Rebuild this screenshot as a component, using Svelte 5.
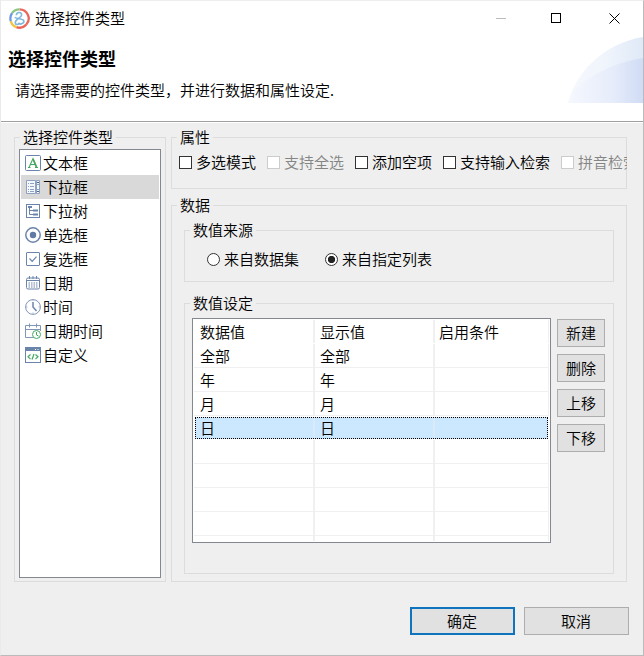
<script>

let types = [
    { id: "text", name: "文本框" },
    { id: "select", name: "下拉框" },
    { id: "tree", name: "下拉树" },
    { id: "radio", name: "单选框" },
    { id: "check", name: "复选框" },
    { id: "date", name: "日期" },
    { id: "time", name: "时间" },
    { id: "datetime", name: "日期时间" },
    { id: "custom", name: "自定义" }
]

let options = [
    { name: "多选模式" },
    { name: "支持全选", disabled: true },
    { name: "添加空项" },
    { name: "支持输入检索" },
    { name: "拼音检索", disabled: true }
]

let sources = ["来自数据集", "来自指定列表"]
let columns = ["数据值", "显示值", "启用条件"]
let actions = ["新建", "删除", "上移", "下移"]

let rows = [
    ["全部", "全部", ""],
    ["年", "年", ""],
    ["月", "月", ""],
    ["日", "日", ""],
    ["", "", ""],
    ["", "", ""],
    ["", "", ""],
    ["", "", ""]
]

let type = $state("select")
let source = $state(1)
let row = $state(3)
let checked = $state([false, false, false, false, false])

function toggle(i) {
    if (options[i].disabled) return
    checked[i] = !checked[i]
}

function selectRow(i) {
    if (rows[i][0] == "") return
    row = i
}

</script>

{#snippet icon(id)}
<svg class="icon" width="16" height="16" viewBox="0 0 16 16" fill="none" stroke="#6b84ab">
    {#if id == "text"}
    <rect x=".5" y=".5" width="15" height="15" rx="1" fill="#fff" />
    <path d="M4 12.5 8 3.5l4 9M5.500 9.500h5M3 12.500h2.500M10 12.500h3" stroke="#45a862" stroke-width="1.1" />
    <path d="M8 4l3.300 8" stroke="#45a862" stroke-width="1.6" />
    {:else if id == "select"}
    <path d="M1.500 1.500h9v13h-9z" fill="#f4f7fb" stroke="#8da2c2" />
    <path d="M3 4.500h1M5 4.500h4M3 7.500h1M5 7.500h4M3 10.500h1M5 10.500h4M3 12.500h1M5 12.500h4" stroke="#8da2c2" />
    <path d="M11.500 1.500h3v13h-3zM11.500 5.500h3M11.500 10.500h3" fill="#f4f7fb" stroke="#8da2c2" />
    <path d="M12 4l1-1 1 1M12 12l1 1 1-1" stroke="#49658f" />
    {:else if id == "tree"}
    <rect x="1.500" y="1.500" width="13" height="13" />
    <path d="M4.500 4v7.500h4M4.500 7.500h4" />
    <path d="M3 4h4M8 7.500h5M8 11.500h5" stroke-width="2" />
    {:else if id == "radio"}
    <circle cx="8" cy="8" r="7.200" stroke-width="1.500" />
    <circle cx="8" cy="8" r="3.200" fill="#607ba4" stroke="none" />
    {:else if id == "check"}
    <rect x="1.500" y="1.500" width="13" height="13" rx=".5" />
    <path d="M4.500 7.500l2.700 2.800 4.300-4.600" stroke-width="1.200" />
    {:else if id == "date"}
    <rect x="1.500" y="3" width="13" height="11" rx="1.500" />
    <path d="M4.500 1v3M8 1v3M11.500 1v3M2 5.500h12" />
    <path d="M3.500 8h9M3.500 10h9M3.500 12h9" stroke-width="1.200" stroke-dasharray="1.500 1" />
    {:else if id == "time"}
    <circle cx="8" cy="8" r="7.400" stroke="#7f96b8" />
    <path d="M8 3v5l3.500 4" stroke-width="1.500" />
    <path d="M8 1v1M1 8h1.500M13.500 8H15M8 13.500V15" stroke="#a5b5cd" />
    {:else if id == "datetime"}
    <path d="M8 14.500H.5v-12h15V8M.5 6.500h15M4.500.5v4M11.500.5v4" stroke="#7f96b8" />
    <circle cx="11.500" cy="11.500" r="4" fill="#fff" stroke="#45a862" />
    <path d="M11.500 9v3l2 1" stroke="#45a862" />
    {:else}
    <rect x=".5" y=".5" width="15" height="15" />
    <path d="M1 2.500h14" stroke-width="3" />
    <path d="M10 2.500h1M12.500 2.500h1" stroke="#fff" />
    <path d="M5.500 7.500 3 9.800l2.500 2.300M10.500 7.500 13 9.800l-2.500 2.300M9 7l-2 5.500" stroke="#45a862" stroke-width="1.200" />
    {/if}
</svg>
{/snippet}

<div class="window">

    <div class="titlebar">
        <svg class="logo" width="21" height="21" viewBox="0 0 20 20" fill="none" stroke-width="2.200">
            <path d="M10 1.300A8.700 8.700 0 0 1 16.500 15.800" stroke="#e8695c" />
            <path d="M16.500 15.800A8.700 8.700 0 0 1 7 18.200" stroke="#ea6557" />
            <path d="M7 18.200A8.700 8.700 0 0 1 1.700 12.500" stroke="#f3c545" />
            <path d="M1.700 12.500A8.700 8.700 0 0 1 3 4.800" stroke="#6e9be0" />
            <path d="M3 4.800A8.700 8.700 0 0 1 10 1.300" stroke="#8cc684" />
            <path d="M7 7c0-3.500 5.500-3.500 5-.3-.4 2.600-6 4.200-6 7 0 2.800 3.500 2.300 4.500.5M5.500 8.800c2 2 7.500 1 8.500 3.200s-3 4.500-5.500 2.500" stroke="#7fb8dd" stroke-width="1.500" />
        </svg>
        <span class="caption">选择控件类型</span>
        <svg width="130" height="12" viewBox="0 0 130 12" fill="none" stroke="#000">
            <path d="M2 6.500h10" stroke="#bbb" />
            <rect x="57.500" y="1.500" width="9" height="9" />
            <path d="M115.500 1.500l10 10M125.500 1.500l-10 10" />
        </svg>
    </div>

    <div class="header">
        <div class="intro">
            <h2>选择控件类型</h2>
            <p>请选择需要的控件类型，并进行数据和属性设定.</p>
        </div>
        <svg class="banner" width="75" height="66" viewBox="0 0 75 66">
            <defs>
                <linearGradient id="outer">
                    <stop offset="0" stop-color="#f6f8fd" />
                    <stop offset=".5" stop-color="#f0f5fc" />
                    <stop offset="1" stop-color="#dfe9f7" />
                </linearGradient>
                <linearGradient id="inner">
                    <stop offset="0" stop-color="#f6f8fe" />
                    <stop offset=".6" stop-color="#e6ecfa" />
                    <stop offset="1" stop-color="#d0dcf5" />
                </linearGradient>
            </defs>
            <path d="M0 66C8 33 38 6 75 0v66z" fill="url(#outer)" />
            <path d="M0 66Q4 54 14 46Q42 26 75 21v45z" fill="url(#inner)" />
        </svg>
    </div>

    <div class="content">
        <div class="group types">
            <span class="legend">选择控件类型</span>
            <div class="list">
                {#each types as t}
                <button class="type" class:selected={type == t.id} onclick={() => { type = t.id }}>{@render icon(t.id)}{t.name}</button>
                {/each}
            </div>
        </div>

        <div class="settings">
            <div class="group props">
                <span class="legend">属性</span>
                <div class="options">
                    {#each options as option, i}
                    <button class="option" class:disabled={option.disabled} onclick={() => { toggle(i) }}><span class="box">{checked[i] ? "✓" : ""}</span>{option.name}</button>
                    {/each}
                </div>
            </div>

            <div class="group data">
                <span class="legend">数据</span>

                <div class="group source">
                    <span class="legend">数值来源</span>
                    <div class="radios">
                        {#each sources as s, i}
                        <button class="option" onclick={() => { source = i }}><span class="dot" class:on={source == i}></span>{s}</button>
                        {/each}
                    </div>
                </div>

                <div class="group values">
                    <span class="legend">数值设定</span>
                    <div class="editor">
                        <div class="table">
                            <div class="row head">
                                {#each columns as column}
                                <span>{column}</span>
                                {/each}
                            </div>
                            {#each rows as cells, i}
                            <div class="row" class:selected={row == i} role="presentation" onclick={() => { selectRow(i) }}>
                                {#each cells as cell}
                                <span>{cell}</span>
                                {/each}
                            </div>
                            {/each}
                            <div class="row rest"><span></span><span></span><span></span></div>
                        </div>
                        <div class="actions">
                            {#each actions as action}
                            <button class="btn">{action}</button>
                            {/each}
                        </div>
                    </div>
                </div>
            </div>
        </div>
    </div>

    <div class="footer">
        <button class="btn primary">确定</button>
        <button class="btn">取消</button>
    </div>

</div>

<style>
.window {
    box-sizing: border-box;
    width: 644px;
    height: 656px;
    display: flex;
    flex-direction: column;
    background: #efefef;
    border: 1px solid #bbb;
    border-top-color: #eee;
    border-left-color: #eaeaea;
    font: 350 15px/22px "Noto Sans CJK SC", sans-serif;
    color: #000;
    overflow: hidden;
}
.window * {
    box-sizing: border-box;
}
button {
    padding: 0;
    margin: 0;
    border: 0;
    background: none;
    font: inherit;
    color: inherit;
    white-space: nowrap;
}
svg {
    flex: none;
}
.titlebar {
    display: flex;
    align-items: center;
    height: 34px;
    padding: 0 19px 0 8px;
    background: #fff;
}
.caption {
    flex: 1;
    margin-left: 5px;
}
.header {
    display: flex;
    justify-content: space-between;
    height: 87px;
    background: #fff;
    border-bottom: 1px solid #a0a0a0;
    box-shadow: 0 1px #fff;
}
.intro {
    padding: 10px 0 0 7px;
}
h2 {
    margin: 0;
    font-size: 18px;
    line-height: 26px;
    font-weight: 700;
}
p {
    margin: 8px 0 0 7px;
}
.banner {
    margin-top: 2px;
}
.content {
    display: flex;
    gap: 5px;
    padding: 15px 15px 0 13px;
}
.group {
    display: flex;
    flex-direction: column;
    border: 1px solid #dcdcdc;
}
.legend {
    align-self: flex-start;
    flex: none;
    height: 22px;
    line-height: 20px;
    margin: -11px 0 0 5px;
    padding: 0 3px;
    background: #efefef;
}
.types {
    width: 152px;
    height: 445px;
    padding: 0 4px 3px;
}
.types .legend {
    margin-left: 1px;
}
.list {
    flex: 1;
    width: 142px;
    padding: 1px;
    background: #fff;
    border: 1px solid #828790;
}
.type {
    display: flex;
    align-items: center;
    gap: 2px;
    width: 138px;
    height: 24px;
    padding-left: 4px;
}
.type.selected {
    background: #d9d9d9;
}
.settings {
    width: 456px;
    display: flex;
    flex-direction: column;
    gap: 16px;
}
.props {
    height: 52px;
}
.options {
    display: flex;
    gap: 11px;
    padding: 2px 0 0 7px;
    overflow: hidden;
    margin-right: -1px;
}
.option {
    display: flex;
    flex: none;
    align-items: center;
    gap: 4px;
}
.box {
    width: 13px;
    height: 13px;
    font-size: 12px;
    line-height: 11px;
    background: #fff;
    border: 1px solid #333;
}
.disabled {
    color: #858585;
}
.disabled .box {
    border-color: #ccc;
}
.data {
    height: 377px;
    padding: 0 12px;
}
.data > .legend {
    margin-left: -7px;
}
.source {
    height: 52px;
    margin-top: 13px;
}
.radios {
    display: flex;
    gap: 26px;
    padding: 6px 0 0 22px;
}
.dot {
    width: 13px;
    height: 13px;
    background: #fff;
    border: 1px solid #333;
    border-radius: 50%;
}
.dot.on {
    background: radial-gradient(circle, #222 3.3px, #fff 4px);
}
.values {
    height: 271px;
    margin-top: 21px;
}
.editor {
    display: flex;
    gap: 6px;
    margin: 3px 0 0 7px;
}
.table {
    width: 359px;
    height: 225px;
    padding: 1px;
    background: #fff;
    border: 1px solid #828790;
}
.row {
    display: grid;
    grid-template-columns: 121px 120px 114px;
    height: 24px;
    border-bottom: 1px solid #f0f0f0;
}
.row span {
    padding-left: 6px;
    line-height: 23px;
    border-right: 2px solid #f0f0f0;
}
.row span + span {
    padding-left: 5px;
}
.row span:last-child {
    border-right-width: 1px;
    padding-left: 4px;
}
.row.head {
    border-color: #fff;
}
.row.selected {
    grid-template-columns: 120px 120px 113px;
    height: 22px;
    margin: 1px;
    border: 0;
    background: #cce8ff;
    outline: 1px dotted #000;
    outline-offset: -1px;
}
.row.selected span {
    padding-left: 5px;
    line-height: 21px;
    border-color: #dceaf5;
}
.row.selected span:last-child {
    border-right: 0;
}
.row.rest {
    height: 5px;
    border: 0;
}
.actions {
    display: flex;
    flex-direction: column;
    gap: 7px;
    padding-top: 1px;
}
.btn {
    width: 48px;
    height: 28px;
    background: #e1e1e1;
    border: 1px solid #adadad;
}
.footer {
    display: flex;
    justify-content: flex-end;
    gap: 9px;
    padding: 25px 14px 0 0;
}
.footer .btn {
    width: 105px;
    padding-right: 1px;
}
.btn.primary {
    border: 2px solid #0f74bd;
}
</style>
